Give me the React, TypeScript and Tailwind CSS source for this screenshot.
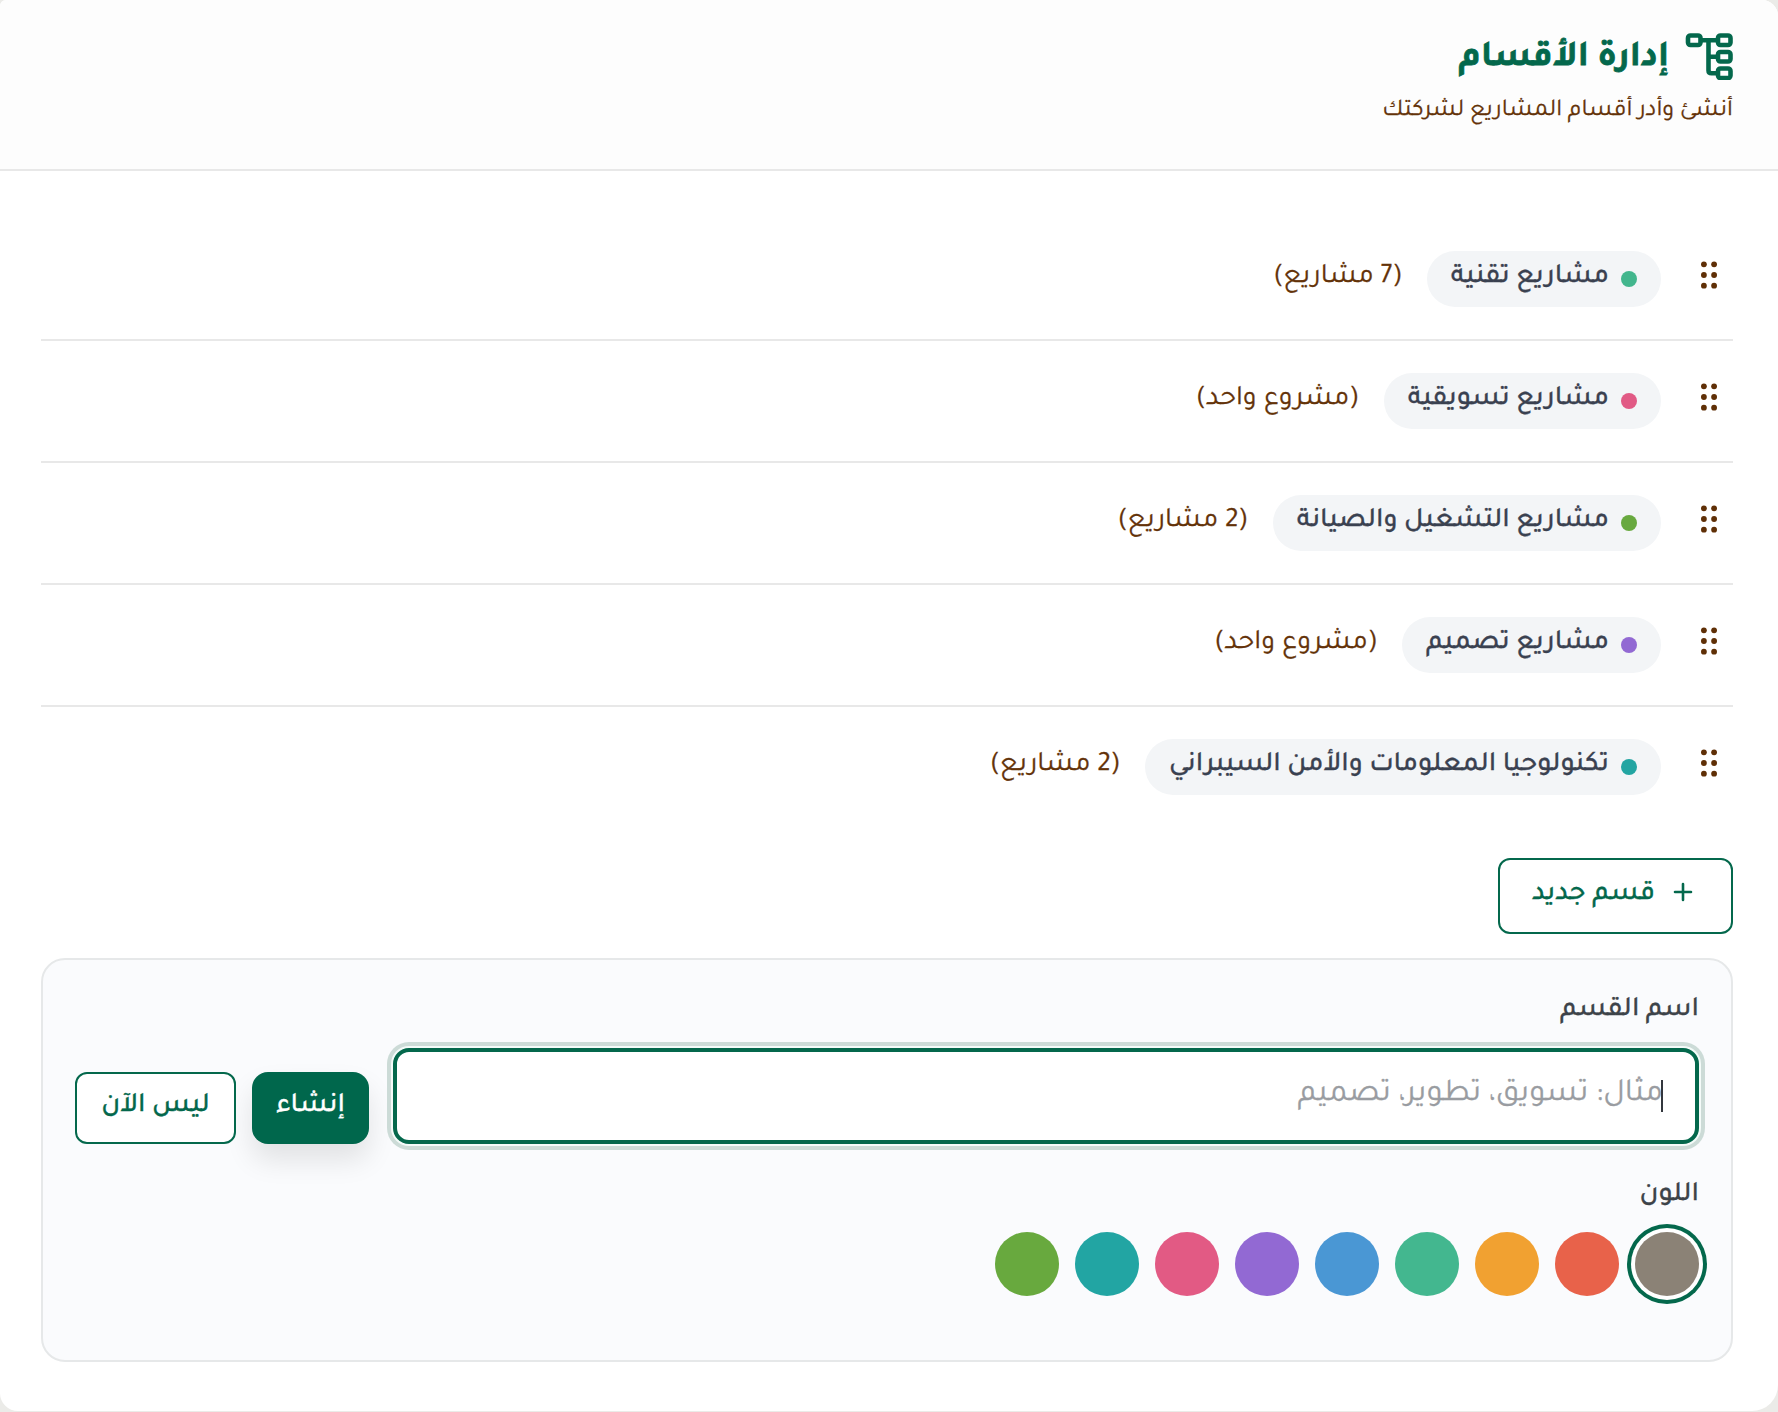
import { useState } from "react";

interface Departamento {
  id: number;
  name: string;
  count: string;
  color: string;
}

const departments: Departamento[] = [
  { id: 1, name: "مشاريع تقنية", count: "(7 مشاريع)", color: "#42b68d" },
  { id: 2, name: "مشاريع تسويقية", count: "(مشروع واحد)", color: "#e15a85" },
  { id: 3, name: "مشاريع التشغيل والصيانة", count: "(2 مشاريع)", color: "#68a93f" },
  { id: 4, name: "مشاريع تصميم", count: "(مشروع واحد)", color: "#9269d3" },
  { id: 5, name: "تكنولوجيا المعلومات والأمن السيبراني", count: "(2 مشاريع)", color: "#23a5a2" },
];

const colors = [
  "#8b8276",
  "#e8624a",
  "#f1a131",
  "#43b78f",
  "#4a97d4",
  "#9269d3",
  "#e25a84",
  "#22a5a3",
  "#68a93e",
];

const TreeIcon = () => (
  <svg width="48" height="48" viewBox="0 0 48 48" fill="none" stroke="currentColor" strokeWidth="4.6">
    <rect x="3" y="3.5" width="12.5" height="9.5" rx="2.5" />
    <rect x="33" y="3.5" width="12.5" height="9.5" rx="2.5" />
    <rect x="33" y="20" width="12.5" height="9.5" rx="2.5" />
    <rect x="33" y="36.5" width="12.5" height="9.5" rx="2.5" />
    <path d="M15.5 8.25H33M23.5 8.25V38.5Q23.5 41.25 26.5 41.25H33M23.5 24.75H33" />
  </svg>
);

const DragHandle = () => (
  <svg className="mb-2" width="16" height="28" viewBox="0 0 16 28" fill="#5f2f06">
    {[3.3, 14, 24.7].map((y) => (
      <g key={y}>
        <circle cx="2.9" cy={y} r="2.9" />
        <circle cx="13.1" cy={y} r="2.9" />
      </g>
    ))}
  </svg>
);

const App = () => {
  const [name, setName] = useState("");
  const [selected, setSelected] = useState(colors[0]);

  return (
    <div className="h-[1412px] overflow-hidden bg-[#ebebe8]">
      <div
        dir="rtl"
        className="flex h-[1411px] flex-col rounded-tl-[6px] rounded-tr-[16px] rounded-br-[26px] rounded-bl-[18px] bg-white font-['Tajawal','Noto_Sans',sans-serif] [-webkit-text-stroke:0.3px]"
      >
        {/* Encabezado */}
        <header className="h-[171px] rounded-tl-[6px] rounded-tr-[16px] border-b-2 border-[#e8e8e8] bg-[#fdfdfd] pt-8 pr-[45px]">
          <div className="flex items-center gap-4 text-[#04684c]">
            <TreeIcon />
            <h1 className="translate-y-1 text-[36px] leading-[48px] font-bold [-webkit-text-stroke:0.8px]">إدارة الأقسام</h1>
          </div>
          <p className="mt-3.5 text-[24px] leading-9 text-[#633208]">أنشئ وأدر أقسام المشاريع لشركتك</p>
        </header>

        <main className="flex flex-col pt-12 pr-[45px] pl-[41px]">
          {/* Lista de secciones */}
          <ul>
            {departments.map((d) => (
              <li
                key={d.id}
                className="flex h-[122px] items-center border-b-2 border-[#e8e8e8] pr-4 last:border-transparent"
              >
                <DragHandle />
                <div className="mr-10 flex h-[56px] items-center gap-3 rounded-full bg-[#f3f5f7] px-6 text-[28px] leading-[42px] font-medium text-[#3a4150]">
                  <span className="size-4 rounded-full" style={{ backgroundColor: d.color }} />
                  <span className="pb-0.5">{d.name}</span>
                </div>
                <span className="mr-6 pb-0.5 text-[28px] leading-[42px] text-[#633208]">{d.count}</span>
              </li>
            ))}
          </ul>

          <button className="mt-[29px] flex h-[76px] w-[235px] items-center self-start rounded-xl border-2 border-[#04684c] pr-[37px] text-[28px] font-medium text-[#04684c]">
            <svg
              className="mb-2"
              width="22"
              height="22"
              viewBox="0 0 22 22"
              stroke="currentColor"
              strokeWidth="2.6"
              strokeLinecap="round"
            >
              <path d="M11 3v16M3 11h16" />
            </svg>
            <span className="mr-[17px] pb-0.5">قسم جديد</span>
          </button>

          {/* Formulario para crear una sección */}
          <section className="mt-6 h-[404px] rounded-3xl border-2 border-[#e6e8e9] bg-[#fafbfd] px-8 pt-[30px]">
            <div className="flex items-end">
              <div className="flex-1">
                <label className="block text-[28px] leading-[42px] font-medium text-[#3d4349]">اسم القسم</label>
                <div className="relative mt-4">
                  <input
                    type="text"
                    value={name}
                    onChange={(e) => setName(e.target.value)}
                    placeholder="مثال: تسويق، تطوير، تصميم"
                    className="block h-24 w-full rounded-2xl border-4 border-[#04684c] bg-white px-8 pb-0.5 text-[32px] shadow-[0_0_0_2px_#f4fbf9,0_0_0_6px_#ccdbd7] outline-none placeholder:text-[#999ca1]"
                  />
                  {/* Cursor de texto */}
                  {!name && <span className="absolute top-8 right-9 h-8 w-0.5 bg-[#33373d]" />}
                </div>
              </div>
              <button className="mr-6 h-[72px] w-[117px] rounded-2xl bg-[#00674c] pb-0.5 text-[28px] font-medium text-white shadow-[0_16px_28px_rgba(0,0,0,0.1)]">
                إنشاء
              </button>
              <button className="mr-4 h-[72px] w-[161px] rounded-xl border-2 border-[#04684c] bg-white pb-0.5 text-[28px] font-medium text-[#04684c]">
                ليس الآن
              </button>
            </div>

            <p className="mt-[31px] text-[28px] leading-[42px] font-medium text-[#3d4349]">اللون</p>
            <div className="mt-[15px] flex gap-4">
              {colors.map((c) => (
                <button
                  key={c}
                  onClick={() => setSelected(c)}
                  className={
                    c === selected
                      ? "size-16 rounded-full shadow-[0_0_0_4px_#ffffff,0_0_0_8px_#04684c]"
                      : "size-16 rounded-full"
                  }
                  style={{ backgroundColor: c }}
                />
              ))}
            </div>
          </section>
        </main>
      </div>
    </div>
  );
};

export default App;
